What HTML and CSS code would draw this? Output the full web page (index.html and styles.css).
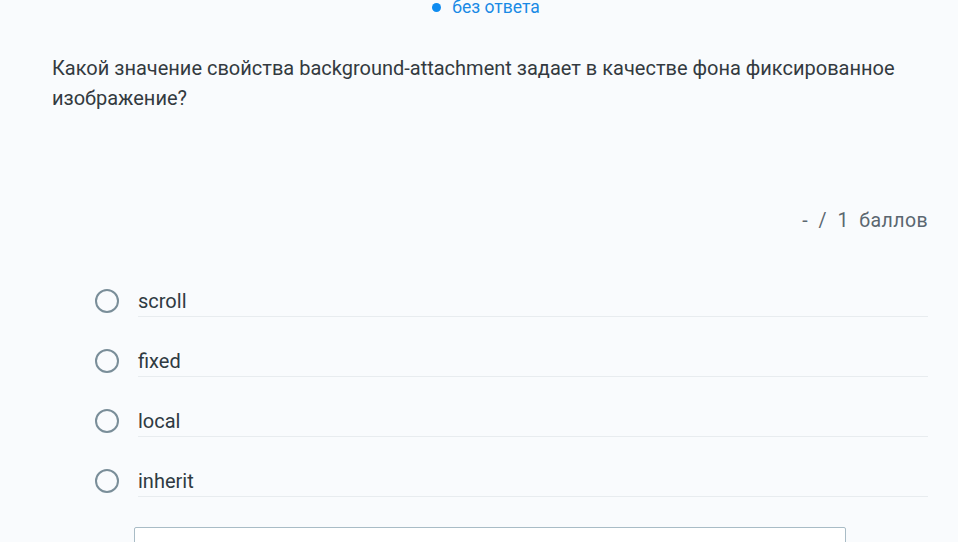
FILE: index.html
```html
<!DOCTYPE html>
<html lang="ru">
<head>
<meta charset="utf-8">
<link rel="stylesheet" href="styles.css">
</head>
<body>
<div class="page">
  <div class="status"><span class="dot"></span><span class="status-text">без ответа</span></div>
  <p class="question">Какой значение свойства background-attachment задает в качестве фона фиксированное изображение?</p>
  <div class="points">-&nbsp; /&nbsp; 1&nbsp; баллов</div>
  <ul class="options">
    <li class="option"><span class="radio"></span><span class="label">scroll</span></li>
    <li class="option"><span class="radio"></span><span class="label">fixed</span></li>
    <li class="option"><span class="radio"></span><span class="label">local</span></li>
    <li class="option"><span class="radio"></span><span class="label">inherit</span></li>
  </ul>
  <div class="answer-box"></div>
</div>
</body>
</html>
```

FILE: styles.css
```css
html, body {
  margin: 0;
  padding: 0;
  background: #f9fbfd;
  font-family: Roboto, "Liberation Sans", sans-serif;
  overflow: hidden;
}
.page {
  width: 958px;
  height: 542px;
  padding: 0 30px 0 52px;
  box-sizing: border-box;
  overflow: hidden;
}
.status {
  display: flex;
  justify-content: center;
  align-items: center;
  gap: 11px;
  height: 14px;
  margin-left: -52px;
  margin-right: -30px;
  padding-left: 14px;
  font-size: 17.5px;
  line-height: 14px;
  color: #1a8ae5;
}
.dot {
  width: 9px;
  height: 9px;
  border-radius: 50%;
  background: #0f8cf0;
}
.question {
  margin: 39px 0 0;
  font-size: 20px;
  line-height: 30px;
  color: #333a40;
}
.points {
  margin-top: 98px;
  text-align: right;
  font-size: 19.5px;
  letter-spacing: 0.4px;
  color: #5b6770;
  line-height: 20px;
}
.options {
  list-style: none;
  margin: 40px 0 0;
  padding: 0 0 0 43px;
}
.option {
  display: flex;
  align-items: center;
  height: 60px;
}
.radio {
  width: 20px;
  height: 20px;
  border: 2.5px solid #7a8e99;
  border-radius: 50%;
  flex: none;
  margin-right: 19px;
  margin-top: -1px;
}
.label {
  flex: 1;
  font-size: 20px;
  color: #2f3a42;
  line-height: 30px;
  padding-bottom: 0;
  border-bottom: 1px solid #e8ecef;
  margin-top: 0;
}
.answer-box {
  margin: 16px 0 0 82px;
  width: 710px;
  height: 40px;
  background: #fff;
  border: 1px solid #a9bcc6;
  border-radius: 2px;
}
```
